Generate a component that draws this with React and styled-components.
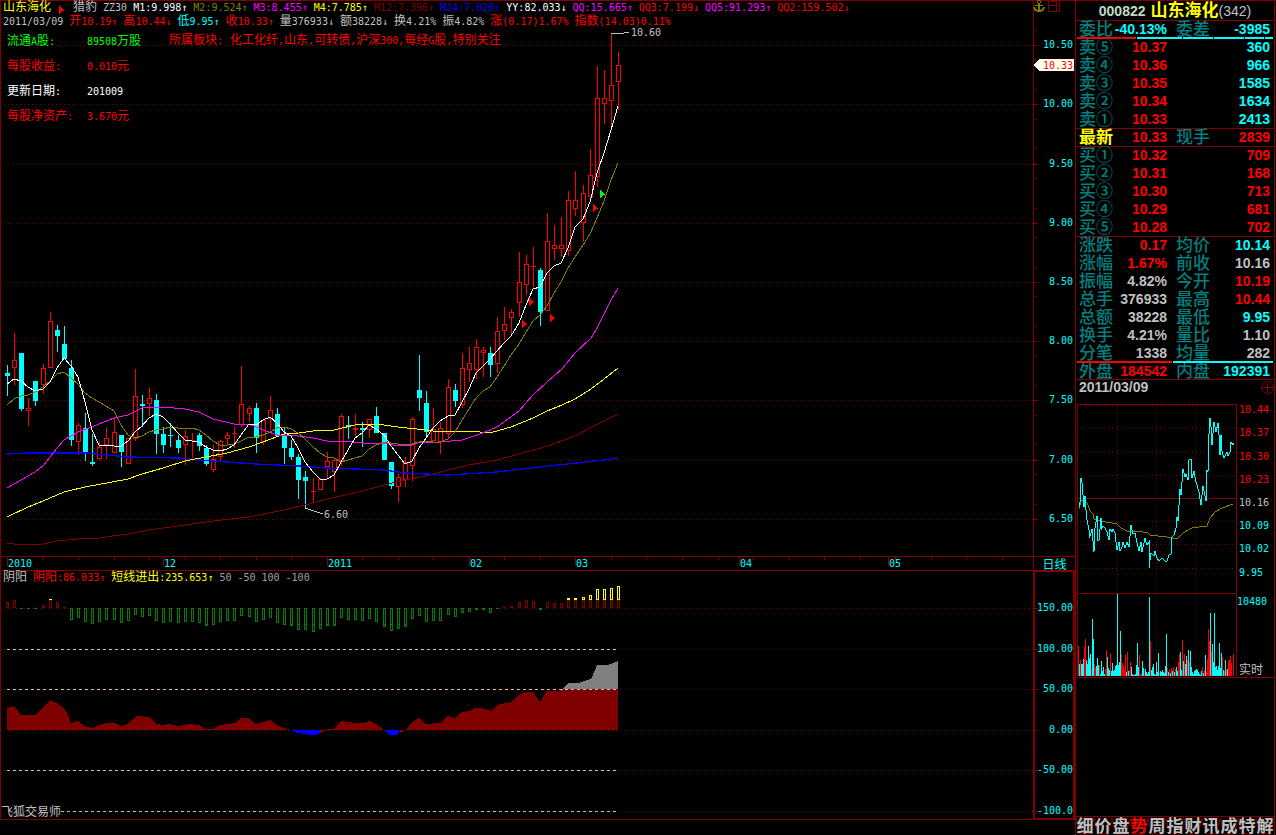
import React from 'react'
import styled, { createGlobalStyle } from 'styled-components'

const RED = '#ff0000'
const DARK = '#800000'
const CYAN = '#00ffff'
const TEAL = '#008080'
const SILVER = '#c0c0c0'
const YELLOW = '#ffff00'
const OLIVE = '#808000'
const MAGENTA = '#ff00ff'
const BLUE = '#0000ff'
const WHITE = '#ffffff'
const GREEN = '#00ff00'
const GRAY = '#a0a0a4'

// [high, body top, body bottom, low, rising]
const candles = [
  [365, 373, 376, 396, 0], [333, 360, 368, 385, 1], [353, 353, 409, 411, 0], [398, 408, 411, 426, 1],
  [381, 381, 401, 406, 0], [364, 368, 385, 394, 1], [312, 321, 368, 368, 1], [325, 330, 336, 352, 0],
  [326, 344, 359, 359, 0], [360, 368, 440, 446, 0], [423, 425, 442, 455, 1], [413, 428, 452, 461, 0],
  [434, 462, 464, 466, 0], [441, 447, 459, 460, 1], [428, 438, 445, 459, 1], [418, 432, 453, 453, 1],
  [435, 435, 452, 467, 0], [438, 438, 464, 464, 1], [369, 396, 439, 441, 1], [395, 404, 406, 427, 0],
  [388, 398, 404, 416, 1], [394, 400, 434, 454, 0], [427, 434, 445, 453, 0], [423, 435, 436, 447, 0],
  [435, 440, 448, 453, 0], [430, 436, 445, 465, 1], [433, 440, 441, 458, 1], [433, 435, 446, 451, 0],
  [445, 448, 464, 466, 0], [445, 459, 470, 472, 1], [440, 441, 457, 460, 1], [432, 435, 439, 445, 1],
  [427, 433, 434, 448, 1], [366, 404, 425, 427, 1], [406, 408, 414, 422, 1], [403, 408, 438, 453, 0],
  [420, 420, 442, 445, 1], [396, 410, 419, 430, 1], [408, 414, 436, 436, 0], [427, 435, 448, 464, 0],
  [440, 448, 457, 460, 0], [454, 457, 480, 499, 0], [471, 477, 481, 508, 0], [478, 491, 492, 503, 1],
  [478, 479, 490, 490, 1], [452, 461, 467, 479, 1], [458, 460, 472, 492, 1], [414, 416, 461, 466, 1],
  [416, 425, 427, 439, 0], [414, 428, 430, 436, 1], [422, 428, 430, 447, 0], [419, 419, 430, 438, 1],
  [407, 416, 433, 433, 0], [433, 433, 460, 460, 0], [462, 462, 486, 489, 0], [474, 477, 487, 502, 1],
  [457, 462, 480, 487, 1], [417, 419, 466, 481, 1], [355, 390, 398, 411, 0], [391, 403, 432, 436, 0],
  [408, 429, 441, 441, 1], [422, 428, 442, 454, 1], [379, 387, 434, 438, 1], [384, 390, 401, 407, 0],
  [353, 368, 405, 408, 1], [347, 363, 370, 382, 1], [339, 347, 370, 379, 1], [347, 350, 353, 377, 1],
  [347, 353, 365, 377, 0], [317, 331, 364, 373, 1], [307, 324, 331, 340, 1], [309, 312, 318, 334, 1],
  [252, 282, 303, 317, 1], [255, 264, 285, 295, 1], [247, 266, 267, 287, 1], [268, 270, 312, 326, 0],
  [213, 241, 311, 311, 1], [225, 245, 249, 260, 1], [217, 245, 249, 257, 1], [191, 200, 251, 256, 1],
  [171, 200, 209, 216, 1], [185, 193, 223, 242, 1], [149, 175, 197, 201, 1], [66, 98, 177, 187, 1],
  [70, 98, 104, 124, 1], [33, 85, 101, 126, 1], [52, 65, 82, 110, 1],
]

const m1 = [
  384, 379, 381, 387, 391, 389, 382, 368, 358, 366, 377, 402, 430, 445, 445, 446, 446, 441, 432, 426,
  418, 414, 417, 424, 433, 440, 441, 442, 447, 450, 451, 449, 445, 435, 424, 425, 420, 417, 423, 432,
  436, 448, 462, 472, 479, 479, 475, 462, 450, 438, 433, 425, 429, 435, 446, 455, 464, 461, 448, 438,
  428, 421, 416, 415, 402, 389, 373, 366, 359, 351, 343, 336, 323, 305, 289, 287, 273, 266, 263, 248,
  227, 219, 202, 173, 153, 130, 106,
]

const m2 = [
  405, 399, 396, 395, 392, 387, 381, 374, 372, 378, 384, 393, 398, 402, 406, 411, 425, 435, 438, 436,
  432, 430, 429, 427, 428, 429, 428, 430, 435, 441, 445, 445, 444, 441, 437, 437, 435, 432, 428, 427,
  429, 433, 439, 447, 453, 457, 458, 462, 460, 458, 456, 449, 445, 442, 443, 444, 445, 444, 442, 441,
  442, 442, 439, 432, 420, 409, 398, 391, 387, 377, 366, 355, 344, 332, 321, 315, 306, 293, 282, 268,
  257, 245, 234, 218, 201, 180, 163,
]

const m3 =
  '7,488 21,480 35,472 43,466 50,457 57,448 64,440 78,432 92,427 99,424 114,418 128,415 142,408 149,407 163,407 185,409 199,412 213,419 234,424 249,424 263,430 277,435 298,436 313,438 327,441 341,441 362,443 384,443 398,446 412,445 420,442 441,442 462,440 480,434 497,427 519,411 533,395 547,382 562,369 575,353 591,338 596,330 604,314 611,300 618,288'
const m4 =
  '7,517 28,507 43,501 64,492 85,487 107,483 128,479 142,474 163,468 185,461 206,457 227,453 249,447 263,442 284,434 299,433 320,430 334,430 355,425 377,424 398,427 426,430 440,432 462,431 480,432 493,432 511,427 533,418 547,411 562,405 575,399 591,389 604,379 618,368'
const m12 =
  '7,543 14,544 43,544 57,541 78,539 99,538 128,534 149,530 185,525 213,521 249,517 284,510 305,505 327,499 341,496 362,491 384,485 405,480 426,476 448,470 469,465 497,460 519,454 548,446 577,435 590,428 604,421 618,414'
const m24 =
  '7,454 28,453 85,453 107,455 128,457 178,458 199,460 227,462 256,464 299,466 327,468 355,469 384,470 405,473 426,474 448,475 497,472 548,466 577,463 604,460 618,458'

// offset of each histogram bar from its zero line, up is positive
const histogram = [
  6, 8, -1, -1, -1, 3, 9, 6, 1, -12, -10, -14, -16, -14, -12, -12, -15, -13, -7, -9, -8, -13, -15, -14,
  -15, -14, -14, -15, -18, -17, -14, -13, -13, -8, -9, -14, -12, -10, -15, -17, -18, -22, -22, -24, -21,
  -18, -18, -10, -12, -12, -13, -11, -14, -19, -23, -21, -19, -11, -8, -14, -13, -13, -7, -9, -5, -4,
  -2, -2, -5, -1, 1, 2, 6, 8, 7, -2, 6, 5, 5, 10, 10, 11, 13, 19, 19, 20, 22,
]

const minutePrice =
  '3,112 4,107 4,98 5,83 6,88 7,100 8,112 9,101 10,115 11,125 13,135 13,143 15,138 16,134 18,157 19,133 21,121 21,145 23,145 25,123 25,135 27,131 29,133 31,137 33,145 34,134 36,137 37,134 39,138 41,155 43,147 44,156 46,152 47,147 49,153 51,147 53,152 55,130 57,139 59,138 61,148 63,156 65,147 66,157 69,143 71,150 73,147 73,173 75,158 78,161 79,156 81,163 83,166 86,163 89,166 91,166 93,160 95,159 95,143 98,140 100,133 101,122 102,126 104,94 105,100 107,74 109,82 110,79 112,85 113,65 115,64 116,83 118,76 120,87 123,97 125,110 127,91 130,106 131,75 132,77 133,39 134,23 135,32 136,50 138,27 140,37 142,28 143,40 144,60 145,40 146,56 148,63 151,57 152,61 154,57 155,47 157,50 158,48'
const minuteAverage =
  '3,114 5,105 9,105 12,110 14,116 17,119 18,124 24,126 36,128 41,129 45,133 51,136 62,136 72,138 74,140 82,141 91,142 96,143 102,143 107,138 116,133 131,131 134,123 139,117 146,113 157,109'

// negative entries are drawn red
const minuteVolume = [
  -30, 12, -16, 12, 12, 17, -29, -37, 16, 12, 30, 18, 22, -7, 57, 37, -12, -9, 10, 18, 11, -10, 2, 15, 5,
  9, 2, -7, -26, 19, 8, 6, -23, 5, 13, 5, 6, 10, 11, 82, 11, 14, 45, -22, -13, -10, -6, -21, 4, -24, 5,
  -6, -14, 9, 2, 1, 1, 2, 11, 33, 9, -21, -2, -3, 15, 8, -5, 7, 4, 2, 4, 79, -35, 6, 9, 12, 2, 1, 14, 4,
  23, -3, 5, 4, 6, 4, 3, 10, 42, -8, 4, -6, 3, -8, 5, -9, 4, -7, 9, 5, -14, -22, 24, 6, -36, 15, -22, 12,
  20, -16, 26, -14, 25, 9, 4, 2, 5, 6, 7, 6, 4, 2, 1, 5, -9, 3, -6, 21, -4, -17, -47, -35, 63, -24, 32,
  14, 63, 9, 10, 6, 10, 33, 8, 23, -19, 6, -5, 16, -6, 7, -15, -16, -20, -13, 0, -22,
]

const indicators = [
  ['M1:9.998↑', WHITE], ['M2:9.524↑', OLIVE], ['M3:8.455↑', MAGENTA], ['M4:7.785↑', YELLOW],
  ['M12:7.396↑', DARK], ['M24:7.020↑', BLUE], ['YY:82.033↓', WHITE], ['QQ:15.665↑', MAGENTA],
  ['QQ3:7.199↓', RED], ['QQ5:91.293↑', MAGENTA], ['QQ2:159.502↓', RED],
]

const dayFigures = [
  ['2011/03/09', SILVER], ['开10.19↑', RED], ['高10.44↓', RED], ['低9.95↑', CYAN], ['收10.33↑', RED],
  ['量376933↓', SILVER], ['额38228↓', SILVER], ['换4.21%', SILVER], ['振4.82%', SILVER],
  ['涨(0.17)1.67%', RED], ['指数(14.03)0.11%', RED],
]

const facts = [
  ['流通A股:', '89508万股', GREEN],
  ['每股收益:', '0.010元', RED],
  ['更新日期:', '201009', WHITE],
  ['每股净资产:', '3.670元', RED],
]

const subFigures = [
  ['阴阳', SILVER], ['阴阳:86.033↑', RED], ['短线进出:235.653↑', YELLOW],
  ['50', GRAY], ['-50', GRAY], ['100', GRAY], ['-100', GRAY],
]

const priceScale = [
  ['10.50', 45], ['10.00', 104], ['9.50', 164], ['9.00', 223], ['8.50', 282],
  ['8.00', 341], ['7.50', 400], ['7.00', 460], ['6.50', 519],
]

const subScale = [
  ['150.00', 38], ['100.00', 79], ['50.00', 119], ['0.00', 160], ['-50.00', 200], ['-100.0', 241],
]

const months = [['2010', 7], ['12', 163], ['2011', 327], ['02', 469], ['03', 575], ['04', 739], ['05', 888]]

const asks = [['卖⑤', '10.37', '360'], ['卖④', '10.36', '966'], ['卖③', '10.35', '1585'], ['卖②', '10.34', '1634'], ['卖①', '10.33', '2413']]
const bids = [['买①', '10.32', '709'], ['买②', '10.31', '168'], ['买③', '10.30', '713'], ['买④', '10.29', '681'], ['买⑤', '10.28', '702']]

const stats = [
  ['涨跌', '0.17', RED, '均价', '10.14', CYAN],
  ['涨幅', '1.67%', RED, '前收', '10.16', SILVER],
  ['振幅', '4.82%', SILVER, '今开', '10.19', RED],
  ['总手', '376933', SILVER, '最高', '10.44', RED],
  ['总额', '38228', SILVER, '最低', '9.95', CYAN],
  ['换手', '4.21%', SILVER, '量比', '1.10', SILVER],
  ['分笔', '1338', SILVER, '均量', '282', SILVER],
]

const minuteScale = [
  ['10.44', 14, RED], ['10.37', 37, RED], ['10.30', 61, RED], ['10.23', 84, RED],
  ['10.16', 107, SILVER], ['10.09', 130, CYAN], ['10.02', 153, CYAN], ['9.95', 177, CYAN],
]

const tabs = ['细', '价', '盘', '势', '周', '指', '财', '讯', '成', '特', '解']

const barX = (i) => Math.round(7 + i * 7.105)
const toPoints = (values) => values.map((y, i) => `${barX(i)},${y}`).join(' ')

// Han characters are set larger than the digits beside them
function Mixed({ children }) {
  return children.split(/([\u4e00-\u9fff]+)/).map((part, i) => (i % 2 ? <Han key={i}>{part}</Han> : part))
}

function Figures({ items }) {
  return items.map(([text, color]) => (
    <Figure key={text} $color={color}>
      <Mixed>{text}</Mixed>
    </Figure>
  ))
}

function Flag({ x, y, color = RED }) {
  return <path d={`M${x} ${y}L${x + 6} ${y + 5}H${x + 3}L${x} ${y + 9}Z`} fill={color} />
}

function PriceChart() {
  return (
    <Chart $height={556} role='img' aria-label='K线图'>
      {priceScale.map(([label, y]) => (
        <line key={label} x1='4' x2='100%' y1={y + 0.5} y2={y + 0.5} stroke={DARK} strokeDasharray='1 3' />
      ))}
      {candles.map(([high, top, bottom, low, up], i) => {
        const x = barX(i)
        const color = up ? RED : CYAN
        return (
          <g key={i} fill={color}>
            <rect x={x} y={high} width='1' height={Math.max(top - high, 0)} />
            <rect x={x} y={bottom} width='1' height={Math.max(low - bottom, 0)} />
            {up && bottom - top > 2 ? (
              <rect x={x - 1.5} y={top + 0.5} width='4' height={bottom - top - 1} fill='none' stroke={color} />
            ) : (
              <rect x={x - 2} y={top} width='5' height={bottom - top} />
            )}
          </g>
        )
      })}
      <g fill='none'>
        <polyline points={m12} stroke={DARK} />
        <polyline points={m24} stroke={BLUE} strokeWidth='1.3' />
        <polyline points={m4} stroke={YELLOW} />
        <polyline points={m3} stroke={MAGENTA} />
        <polyline points={toPoints(m2)} stroke={OLIVE} />
        <polyline points={toPoints(m1)} stroke={WHITE} />
        <path d='M611 33.5H621L629 32M305 508L323 514' stroke={SILVER} />
      </g>
      <Flag x={522} y={320} />
      <Flag x={529} y={298} />
      <Flag x={550} y={314} />
      <Flag x={593} y={204} />
      <Flag x={600} y={190} color={GREEN} />
      <ChartText x='631' y='36' fill={SILVER}>10.60</ChartText>
      <ChartText x='324' y='518' fill={SILVER}>6.60</ChartText>
    </Chart>
  )
}

function PriceAxis() {
  const minor = Array.from({ length: 34 }, (_, i) => 30 + i * 14.8)
  return (
    <Chart $height={556}>
      {minor.map((y, i) => (
        <rect key={y} x='2' y={Math.round(y)} width={i % 2 ? 1 : 2} height='1' fill={DARK} />
      ))}
      {priceScale.map(([label, y]) => (
        <g key={label}>
          <rect x='0' y={y} width='5' height='1' fill={DARK} />
          <ChartText x='40' y={y + 3} fill={CYAN} textAnchor='end'>{label}</ChartText>
        </g>
      ))}
      <polygon points='1,65 6,59 41,59 41,71 6,71' fill='#fffff0' />
      <ChartText x='40' y='69' fill={RED} textAnchor='end'>10.33</ChartText>
    </Chart>
  )
}

function TimeAxis() {
  const ticks = Array.from({ length: 30 }, (_, i) => barX(i * 5))
  return (
    <Chart $height={13}>
      {ticks.map((x) => (
        <rect key={x} x={x} y='0' width='1' height='3' fill={DARK} />
      ))}
      {months.map(([label, x]) => (
        <g key={x}>
          <rect x={x} y='0' width='1' height='9' fill={DARK} />
          <ChartText x={x + 1} y='10' fill={CYAN}>{label}</ChartText>
        </g>
      ))}
    </Chart>
  )
}

function HistogramBar({ index, value }) {
  const x = barX(index) - 1
  if (value < -2) {
    return (
      <g fill='none' stroke='#008000'>
        <rect x={x + 0.5} y='38.5' width='2' height={-value - 1} />
        {value < -17 && <line x1={x} x2={x + 3} y1='54.5' y2='54.5' />}
      </g>
    )
  }
  if (value < 0) return <rect x={x} y='38' width='3' height={-value} fill='#008000' />
  if (value < 3) return <rect x={x} y={38 - value} width='3' height={value} fill={DARK} />
  const base = Math.min(value, 8)
  return (
    <g fill='none'>
      <rect x={x + 0.5} y={38.5 - base} width='2' height={base - 1} stroke={DARK} />
      {value > 10 && <rect x={x + 0.5} y={38.5 - value} width='2' height={value - 9} stroke={YELLOW} />}
      {(value === 9 || value === 10) && <rect x={x} y={38 - value} width='3' height={value - 8} fill={YELLOW} />}
    </g>
  )
}

function SubChart() {
  return (
    <Chart $height={250} role='img' aria-label='阴阳'>
      {subScale.map(([label, y]) => (
        <line key={label} x1='4' x2='100%' y1={y + 0.5} y2={y + 0.5} stroke={DARK} strokeDasharray='1 3' />
      ))}
      {histogram.map((value, i) => (
        <HistogramBar key={i} index={i} value={value} />
      ))}
      <path
        fill={DARK}
        d='M7 160V138L13 136 15 137 21 145H35L43 138 50 130 57 133 64 138 68 145 71 153 78 151 86 157 93 158 99 155 107 153H115L121 156 127 154 137 146 149 147 157 154 163 155 170 154 178 156 188 154 199 155 206 159H213L220 155 235 153 241 148H248L256 154 263 152 270 150 277 155 284 158 291 160ZM318 160L320 163 327 160V159H334L341 151 355 153H363L370 151 376 154 384 160ZM400 160V163L406 160 412 152 419 148 426 154 440 153 448 146 455 148 462 142 469 141 475 138H483L491 141 497 135 511 132 519 125 526 122H533L540 132 547 121H561L564 119H618V160Z'
      />
      <path fill={BLUE} d='M291 160L297 163 305 164 311 165H316L320 163V160ZM384 160L390 165H396L399 163V160Z' />
      <path fill='#808080' d='M561 121L568 113H578L590 109 592 107 597 95H608L618 91V119H563Z' />
      <g stroke={SILVER} strokeDasharray='3 3'>
        {[79, 119, 200].map((y) => (
          <line key={y} x1='7' x2='618' y1={y + 0.5} y2={y + 0.5} />
        ))}
        <line x1='61' x2='618' y1='241.5' y2='241.5' />
      </g>
      <WatermarkText x='1' y='246' fill={SILVER}>飞狐交易师</WatermarkText>
    </Chart>
  )
}

function SubAxis() {
  const minor = Array.from({ length: 21 }, (_, i) => 38 + Math.round(i * 10.15))
  return (
    <Chart $height={250}>
      {minor.map((y) => (
        <rect key={y} x='2' y={y} width='1' height='1' fill={DARK} />
      ))}
      {subScale.map(([label, y]) => (
        <g key={label}>
          <rect x='0' y={y} width='5' height='1' fill={DARK} />
          <ChartText x='40' y={y + 3} fill={CYAN} textAnchor='end'>{label}</ChartText>
        </g>
      ))}
    </Chart>
  )
}

function MinuteChart() {
  return (
    <Chart $height={283} role='img' aria-label='分时图'>
      <g stroke={DARK} fill='none'>
        <path d='M1.5 283V9.5H160.5V283M1.5 103.5H160M1.5 198.5H160M1 282.5H198' />
        <path
          strokeDasharray='1 3'
          d='M4 10.5H160M4 33.5H160M4 57.5H160M4 80.5H160M4 126.5H160M4 149.5H160M4 173.5H160M41.5 11V282M80.5 11V282M119.5 11V282'
        />
      </g>
      {minuteVolume.map((v, i) => (
        <rect key={i} x={i + 2} y={281 - Math.abs(v)} width='1' height={Math.abs(v)} fill={v < 0 ? RED : CYAN} />
      ))}
      <polyline points={minuteAverage} fill='none' stroke={OLIVE} />
      <polyline points={minutePrice} fill='none' stroke={CYAN} />
      {minuteScale.map(([label, y, color]) => (
        <ChartText key={label} x='163' y={y + 4} fill={color}>{label}</ChartText>
      ))}
      <ChartText x='161' y='210' fill={CYAN}>10480</ChartText>
      <WatermarkText x='163' y='279' fill={SILVER}>实时</WatermarkText>
    </Chart>
  )
}

function QuoteRows({ rows, volumeColor }) {
  return (
    <QuoteTable>
      <tbody>
        {rows.map(([label, price, volume]) => (
          <tr key={label}>
            <Label scope='row'>{label}</Label>
            <Value $color={RED}>{price}</Value>
            <Value $color={volumeColor} colSpan='2'>{volume}</Value>
          </tr>
        ))}
      </tbody>
    </QuoteTable>
  )
}

function StatRows({ rows, ruled, highlight }) {
  return (
    <QuoteTable $ruled={ruled}>
      <tbody>
        {rows.map(([label, value, color, label2, value2, color2]) => (
          <tr key={label}>
            <Label scope='row' $highlight={highlight}>{label}</Label>
            <Value $color={color}>{value}</Value>
            <Label scope='row' $second>{label2}</Label>
            <Value $color={color2}>{value2}</Value>
          </tr>
        ))}
      </tbody>
    </QuoteTable>
  )
}

function App() {
  const [active, setActive] = React.useState('势')

  return (
    <>
      <GlobalStyle />
      <Desk>
        <main>
          <Panel>
            <Plot>
              <PriceChart />
              <Overlay>
                <FigureRow>
                  <Figure $color={YELLOW}><Mixed>山东海化</Mixed></Figure>
                  <FlagIcon width='6' height='10' viewBox='0 0 6 10' aria-hidden='true'>
                    <path d='M0 0L6 6H3L0 10Z' fill={RED} />
                  </FlagIcon>
                  <Figure $color={SILVER}><Mixed>猎豹 ZZ30</Mixed></Figure>
                  <Figures items={indicators} />
                </FigureRow>
                <FigureRow>
                  <Figures items={dayFigures} />
                </FigureRow>
                <InfoBlock>
                  <FactTable>
                    <tbody>
                      {facts.map(([name, value, color]) => (
                        <FactRow key={name} $color={color}>
                          <th scope='row'><Mixed>{name}</Mixed></th>
                          <td><Mixed>{value}</Mixed></td>
                        </FactRow>
                      ))}
                    </tbody>
                  </FactTable>
                  <Sectors>
                    <span><Mixed>所属板块:</Mixed></span>
                    <span><Mixed>化工化纤,山东,可转债,沪深300,每经G股,特别关注</Mixed></span>
                  </Sectors>
                </InfoBlock>
              </Overlay>
            </Plot>
            <Axis>
              <PriceAxis />
              <ToolButtons>
                <IconButton aria-label='锁定'>
                  <svg width='12' height='13' viewBox='0 0 12 13' fill='none' stroke={OLIVE}>
                    <path d='M5 .5H7L8 2 7 3.5H5L4 2ZM2 5.5H10' />
                    <path d='M6 4V12' strokeWidth='2' />
                    <path d='M1 7L2 9.5 4.5 11H7.5L10 9.5 11 7' strokeWidth='2' />
                  </svg>
                </IconButton>
                <IconButton aria-label='分割'>
                  <svg width='13' height='12' viewBox='0 0 13 12' fill='none' stroke={DARK} shapeRendering='crispEdges'>
                    <path d='M1.5 .5V11.5H12.5V.5M9.5 .5V11.5M1 5.5H10M4 1.5H10' />
                  </svg>
                </IconButton>
              </ToolButtons>
            </Axis>
          </Panel>
          <TimePanel>
            <TimePlot><TimeAxis /></TimePlot>
            <Period>日线</Period>
          </TimePanel>
          <Panel>
            <Plot $bottom>
              <SubChart />
              <Overlay>
                <FigureRow><Figures items={subFigures} /></FigureRow>
              </Overlay>
            </Plot>
            <Axis $framed>
              <SubAxis />
            </Axis>
          </Panel>
        </main>
        <Side>
          <StockTitle>
            <Code>000822</Code>
            <Name>山东海化</Name>
            <Count>(342)</Count>
          </StockTitle>
          <StatRows ruled rows={[['委比', '-40.13%', CYAN, '委差', '-3985', CYAN]]} />
          <SplitBar>
            <Segment $color={RED} $grow={41} />
            <Segment $color={RED} $grow={3} />
            <Segment $color={RED} $grow={14} />
            <Segment $color={CYAN} $grow={46} />
            <Segment $color={CYAN} $grow={31} />
            <Segment $color={CYAN} $grow={30} />
            <Segment $color={CYAN} $grow={20} />
            <Segment $color={CYAN} $grow={8} />
          </SplitBar>
          <QuoteRows rows={asks} volumeColor={CYAN} />
          <StatRows ruled highlight rows={[['最新', '10.33', RED, '现手', '2839', RED]]} />
          <Ruled>
            <QuoteRows rows={bids} volumeColor={RED} />
          </Ruled>
          <StatRows ruled rows={stats} />
          <SplitBar>
            <Segment $color={RED} $grow={95} />
            <Segment $color={CYAN} $grow={100} />
          </SplitBar>
          <StatRows rows={[['外盘', '184542', RED, '内盘', '192391', CYAN]]} />
          <DateBar>
            <time>2011/03/09</time>
            <svg width='13' height='13' viewBox='0 0 13 13' fill='none' stroke={DARK} aria-hidden='true'>
              <circle cx='6.5' cy='6.5' r='6' />
              <path d='M6.5 2V11M1 6.5H12' />
            </svg>
          </DateBar>
          <MinuteChart />
          <Tabs>
            {tabs.map((tab) => (
              <Tab key={tab} $active={tab === active} onClick={() => setActive(tab)}>
                <TabShape viewBox='0 0 18 18' preserveAspectRatio='none' aria-hidden='true'>
                  <path d='M0 1L4 17H14L18 1' fill='none' stroke={DARK} />
                </TabShape>
                <TabText>{tab}</TabText>
              </Tab>
            ))}
          </Tabs>
        </Side>
      </Desk>
    </>
  )
}

const mono = `'DejaVu Sans Mono', 'Noto Sans CJK SC', monospace`

const GlobalStyle = createGlobalStyle`
  * {
    box-sizing: border-box;
  }
  body {
    margin: 0;
    background: #000;
    color: ${SILVER};
    font-family: ${mono};
    font-size: 10px;
  }
  table {
    border-collapse: collapse;
  }
  th, td {
    padding: 0;
    font-weight: inherit;
    text-align: left;
  }
`

const Desk = styled.div`
  display: grid;
  grid-template-columns: minmax(0, 1fr) 201px;
  min-height: 100vh;
`

const Panel = styled.section`
  display: grid;
  grid-template-columns: minmax(0, 1fr) 42px;
`

const Plot = styled.div`
  position: relative;
  box-shadow: inset 1px ${(p) => (p.$bottom ? '-1px' : '1px')} 0 ${DARK};
`

const Axis = styled.div`
  position: relative;
  box-shadow: ${(p) => (p.$framed ? `inset 0 0 0 2px ${DARK}` : `inset 1px 1px 0 ${DARK}`)};
`

const Chart = styled.svg`
  display: block;
  width: 100%;
  height: ${(p) => p.$height}px;
  shape-rendering: crispEdges;
`

const ChartText = styled.text`
  font-family: ${mono};
  font-size: 10px;
  font-weight: normal;
`

const WatermarkText = styled.text`
  font-family: 'Noto Sans CJK SC', sans-serif;
  font-size: 12px;
  font-weight: normal;
`

const Overlay = styled.div`
  position: absolute;
  inset: 0;
  padding-top: 1px;
`

const FigureRow = styled.div`
  display: flex;
  gap: 6px;
  height: 14px;
  padding-left: 3px;
  line-height: 14px;
  white-space: nowrap;
`

const Figure = styled.span`
  color: ${(p) => p.$color};
`

const Han = styled.span`
  font-family: 'Noto Sans CJK SC', sans-serif;
  font-size: 12px;
  line-height: 0;
`

const FlagIcon = styled.svg`
  align-self: flex-end;
  margin: 0 2px;
`

const InfoBlock = styled.div`
  display: flex;
  padding-left: 7px;
  line-height: 24px;
  white-space: nowrap;
`

const FactTable = styled.table`
  width: 162px;
  table-layout: fixed;
`

const FactRow = styled.tr`
  height: 25px;
  color: ${(p) => p.$color};

  th {
    width: 80px;
  }
`

const Sectors = styled.div`
  display: flex;
  gap: 7px;
  color: ${RED};
`

const ToolButtons = styled.div`
  position: absolute;
  top: 0;
  left: 0;
  display: flex;
  gap: 2px;
`

const IconButton = styled.button`
  display: flex;
  padding: 0;
  border: 0;
  background: none;
  cursor: pointer;
`

const TimePanel = styled(Panel)`
  border-top: 1px solid ${DARK};
  box-shadow: 0 1px 0 ${DARK};
`

const TimePlot = styled.div`
  box-shadow: inset 1px 0 0 ${DARK};
`

const Period = styled.span`
  border-left: 1px solid ${DARK};
  color: ${CYAN};
  font-family: 'Noto Sans CJK SC', sans-serif;
  font-size: 12px;
  line-height: 13px;
  text-align: center;
`

const Side = styled.aside`
  display: flex;
  flex-direction: column;
  margin-right: 1px;
  border: 1px solid ${DARK};
  border-bottom: 0;
  font-family: 'Liberation Sans', 'Noto Sans CJK SC', sans-serif;
  font-size: 14px;
  font-weight: bold;
`

const StockTitle = styled.h1`
  display: flex;
  justify-content: center;
  align-items: center;
  height: 19px;
  margin: 0;
  font-size: 14px;
  line-height: 18px;
`

const Code = styled.span`
  margin-right: 5px;
  color: #c0dcc0;
`

const Name = styled.span`
  color: ${YELLOW};
  font-size: 17px;
`

const Count = styled.span`
  font-weight: normal;
`

const QuoteTable = styled.table`
  width: 100%;
  table-layout: fixed;
  box-shadow: ${(p) => (p.$ruled ? `inset 0 1px 0 ${DARK}` : 'none')};

  tr {
    height: 18px;
  }
  th {
    width: 38px;
  }
  td:nth-child(2) {
    width: 53px;
  }
  th:nth-child(3) {
    width: 47px;
  }
  td:last-child {
    padding-right: 4px;
  }
`

const Label = styled.th`
  padding-top: 2px;
  padding-left: ${(p) => (p.$second ? 9 : 3)}px;
  color: ${(p) => (p.$highlight ? YELLOW : TEAL)};
  font-size: 17px;
  font-weight: ${(p) => (p.$highlight ? 700 : 500)};
  line-height: 16px;
  white-space: nowrap;
`

const Value = styled.td`
  color: ${(p) => p.$color};
  line-height: 18px;
  text-align: right;
  white-space: nowrap;
`

const Ruled = styled.div`
  box-shadow: inset 0 1px 0 ${DARK};
`

const SplitBar = styled.div`
  display: flex;
  gap: 1px;
  height: 2px;
  margin: -1px 1px;
  z-index: 1;
`

const Segment = styled.span`
  flex: ${(p) => p.$grow} 1 0;
  background: ${(p) => p.$color};
`

const DateBar = styled.div`
  display: flex;
  justify-content: space-between;
  align-items: center;
  height: 15px;
  padding-left: 3px;
  line-height: 15px;
  box-shadow: 0 -1px 0 ${DARK};
`

const Tabs = styled.nav`
  display: flex;
  height: 19px;
  margin-top: auto;
  border-top: 1px solid ${DARK};
`

const Tab = styled.button`
  position: relative;
  display: flex;
  justify-content: center;
  flex: 1 1 0;
  min-width: 0;
  padding: 0;
  border: 0;
  background: none;
  color: ${(p) => (p.$active ? RED : SILVER)};
  font-family: 'Noto Sans CJK SC', sans-serif;
  font-size: 17px;
  font-weight: 700;
  line-height: 16px;
  cursor: pointer;
`

const TabShape = styled.svg`
  position: absolute;
  inset: 0;
  width: 100%;
  height: 100%;
`

const TabText = styled.span`
  position: relative;
`

export default App
